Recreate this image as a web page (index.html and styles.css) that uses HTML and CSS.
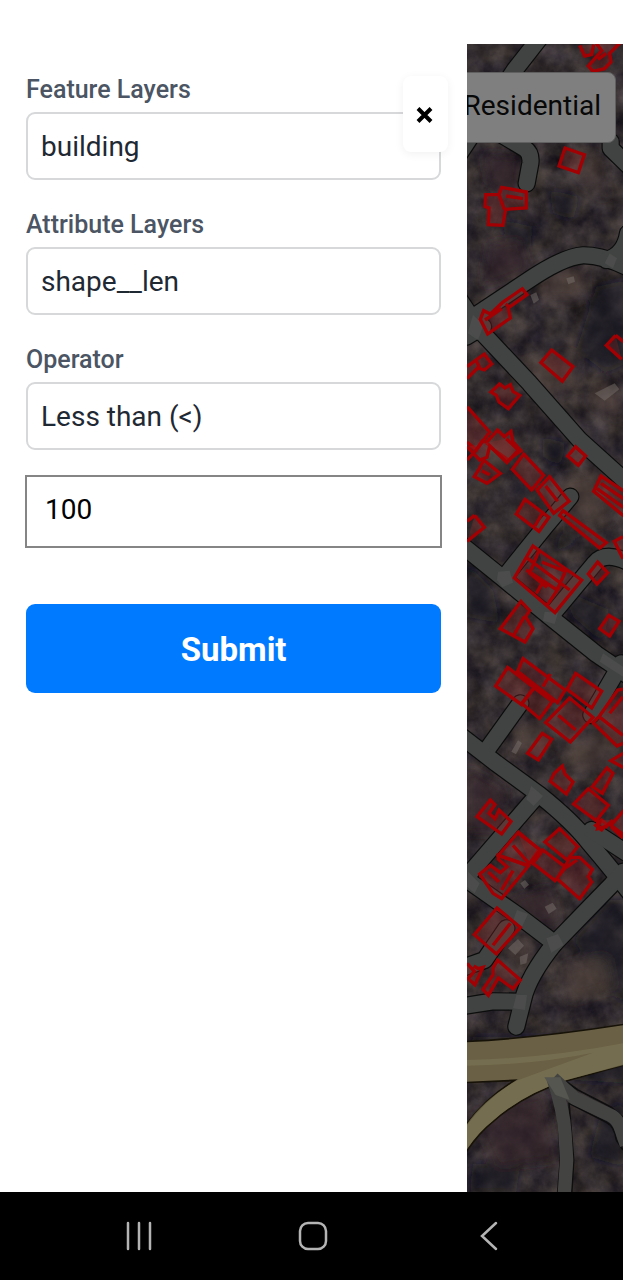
FILE: index.html
```html
<!DOCTYPE html>
<html lang="en">
<head>
<meta charset="utf-8">
<meta name="viewport" content="width=device-width, initial-scale=1">
<title>Layer filter</title>
<link rel="stylesheet" href="styles.css">
</head>
<body>
<div class="app">
  <main class="screen">
    <aside class="drawer">
      <form class="filter">
        <div class="field">
          <label class="label" for="feature">Feature Layers</label>
          <select class="select" id="feature"><option>building</option></select>
        </div>
        <div class="field">
          <label class="label" for="attribute">Attribute Layers</label>
          <select class="select" id="attribute"><option>shape__len</option></select>
        </div>
        <div class="field">
          <label class="label" for="operator">Operator</label>
          <select class="select" id="operator"><option>Less than (&lt;)</option></select>
        </div>
        <input class="value" type="text" value="100" aria-label="Value">
        <button class="submit" type="submit">Submit</button>
      </form>
      <button class="close" type="button" aria-label="Close">
        <svg width="20" height="20" viewBox="0 0 20 20"><path d="M2 4.500L15 17.500M15 4.500L2 17.500" stroke="#000" stroke-width="4" fill="none"/></svg>
      </button>
    </aside>
    <section class="map" aria-label="Map">
      <svg class="map-art" viewBox="12 132 468 3444" preserveAspectRatio="xMinYMin slice" aria-hidden="true">
        <defs>
          <filter id="ground" x="0" y="0" width="100%" height="100%" color-interpolation-filters="sRGB">
            <feTurbulence type="fractalNoise" baseFrequency=".016" numOctaves="5" seed="8"/>
            <feColorMatrix values=".28 .1 0 0 .01  .25 .1 0 0 0  .2 .1 .06 0 .005  0 0 0 0 1"/>
          </filter>
          <filter id="soft" x="-40%" y="-40%" width="180%" height="180%"><feGaussianBlur stdDeviation="16"/></filter>
          <g id="roads" fill="none" stroke-linejoin="round">
            <path d="M235 108L155 210L-10 460"/>
            <path d="M100 395L185 445Q206 460 202 490L191 550"/>
            <path d="M443 425V445L510 510"/>
            <path d="M20 970L40 945L190 845Q300 770 360 766Q420 765 500 805"/>
            <path d="M430 780Q485 765 495 700"/>
            <path d="M10 1010L60 980"/>
            <path d="M-10 900L50 990L200 1150L350 1320L500 1455"/>
            <path d="M-10 1630L120 1735L260 1850L400 1962L500 2030"/>
            <path d="M125 1730L250 1575L322 1490"/>
            <path d="M262 1850L395 1690Q425 1652 500 1688"/>
            <path d="M75 2245L172 2110"/>
            <path d="M-10 2205L100 2290L230 2385Q330 2465 380 2530Q440 2600 510 2690"/>
            <path d="M475 1990L385 2145"/>
            <path d="M215 2395L20 2620"/>
            <path d="M-10 2620L20 2645L170 2750L275 2830"/>
            <path d="M480 2615L445 2655L275 2830Q195 2930 180 3000L160 3080"/>
            <path d="M-10 3020L90 3004L170 3005"/>
            <path d="M385 2490L500 2565"/>
            <path d="M-5 2905L65 2880L130 2785"/>
          </g>
        </defs>
        <rect x="12" y="132" width="468" height="3444" filter="url(#ground)"/>
        <g filter="url(#soft)">
          <path fill="#0e141b" opacity=".6" d="M400 860L490 840V1090L430 1120L340 1050ZM10 1690L90 1770L110 1870L10 1850ZM300 1590L350 1620L270 1660ZM240 1310L310 1330L290 1400L240 1370ZM440 2700H490V3030L330 2820ZM30 3110H490V3250L330 3240L10 3210ZM30 3490L170 3500L160 3576H20ZM410 3350L480 3300V3500L380 3470ZM120 660L210 680L200 740L130 730ZM260 570L350 590L330 660L270 640ZM300 1770L440 1830L420 1930L330 1850Z"/>
          <path fill="#5b4b40" opacity=".5" d="M230 800L370 810L350 900L240 900ZM360 460L410 470L430 600L330 520ZM180 1090L330 1060L350 1160L230 1190ZM290 1440L400 1410L450 1560L330 1590ZM160 2170L240 2150L260 2250L150 2280ZM400 1140L480 1180L470 1260L380 1210ZM300 2900L430 2870L450 2960L320 3000ZM20 1370L180 1290L120 1420ZM300 2220L470 2180L440 2300L330 2320ZM130 2840L200 2800L210 2880L150 2900Z"/>
          <path fill="#35262a" opacity=".65" d="M30 3340L240 3280L280 3480L100 3500ZM80 730L170 720L200 810L60 860ZM60 460L170 470L160 600L80 560ZM10 2300L130 2370L100 2500H10ZM120 2700L260 2660L290 2760L230 2780Z"/>
        </g>
        <g fill="#77706b" opacity=".5">
          <path d="M310 835l22-6 4 16-20 8zM202 885l18-8 8 22-16 12zM172 2650l14-10 12 14-14 12zM245 2720l24-12 12 18-24 16zM135 2845l30-28 18 20-26 28zM170 2870l26-10-6 30-18 4zM145 2255l20-34 12 8-18 34zM395 1180l60-30 14 18-44 34z"/>
        </g>
        <use href="#roads" stroke="#0b0c0c" stroke-width="55" stroke-linecap="round"/>
        <use href="#roads" stroke="#414342" stroke-width="48" stroke-linecap="round"/>
        <g fill="#515352" opacity=".6">
          <path d="M30 945L62 975L45 1020L14 1000ZM105 1715L140 1712L150 1748L118 1762L102 1740ZM245 1835L285 1838L275 1872L240 1862ZM250 2815L285 2802L302 2835L265 2858ZM160 2985H192L186 3030L150 3025ZM205 2358L240 2388L212 2418L190 2398ZM162 2730L195 2742L175 2785L148 2768ZM15 2615L50 2650L35 2680L12 2660ZM420 1960L480 2000V2030L410 1985ZM440 760L462 775L450 805L425 790Z"/>
        </g>
        <path d="M0 3125Q220 3115 490 3072V3193L310 3243Q180 3285 90 3365Q45 3400 0 3470V3388Q60 3300 155 3241L0 3248Z" fill="#6a6046" stroke="#171207" stroke-width="5"/>
        <path d="M12 3180Q250 3175 480 3130V3196L310 3240Q180 3282 90 3362Q45 3397 12 3446V3372Q60 3300 160 3242L390 3158Q220 3193 12 3197Z" fill="#7b7352" opacity=".7"/>
        <g fill="none" stroke-linejoin="round">
          <path d="M260 3262Q282 3310 288 3390L292 3480L284 3580M326 3580L332 3480L318 3310L430 3367Q455 3380 460 3420L480 3450M310 3245L345 3270L445 3322L485 3355" stroke="#0e0e0e" stroke-width="5"/>
          <path d="M270 3235Q302 3330 306 3400L311 3480L304 3580M270 3235L335 3295L440 3345Q465 3355 475 3390L490 3435" stroke="#434442" stroke-width="40"/>
          <path d="M244 3232H292L320 3300L278 3285Z" fill="#565650"/>
        </g>
        <g class="buildings">
          <g transform="translate(0 90)">
            <path d="M350 46L365 78L386 74L392 44M400 40L416 62L376 108L390 124L425 116L444 96L440 70L474 36M405 88L430 70"/>
            <path d="M306 354L364 374L346 428L288 408Z"/>
            <path d="M68 494H108L116 472L190 486V534L128 538L120 586L76 584L78 534L66 530ZM108 494L124 538M130 498L180 506"/>
          </g>
          <g transform="translate(0 720)">
            <path d="M52 238L62 212L82 222L118 188L178 146L192 164L136 204L142 234L74 282ZM66 240L116 206M128 192L142 204"/>
            <path d="M266 330L330 380L298 424L234 368Z"/>
            <path d="M458 286L430 316L476 358M458 286L490 312"/>
            <path d="M12 380L64 342L86 372L64 390L44 384L12 416M40 362L52 388"/>
            <path d="M84 456L110 432L126 444L142 434L150 454L170 466L136 506L108 486L100 466Z"/>
            <path d="M12 500L80 576L40 630L12 606M70 608L104 570L124 590L144 574L150 606L174 632L136 660L94 630Z"/>
          </g>
          <g transform="translate(0 1320)">
            <path d="M12 20L50 60L72 52L80 18L132 68L166 30L130 -4M12 60L40 30L60 0M62 60L112 100L72 130L34 110L50 84ZM56 92L80 104"/>
            <path d="M182 42L242 106L206 150L148 88ZM260 110L318 184L272 220L222 150ZM248 138L284 184"/>
            <path d="M186 178L258 232L228 274L160 222ZM240 216L216 258M338 20L368 48L346 76L314 48Z"/>
            <path d="M490 158L414 108L392 154L490 234M414 130L490 182M402 146L484 204M300 212L430 308L410 324L290 226ZM35 226L64 262L12 304M12 244L35 226"/>
            <path d="M210 318L356 420L276 518L154 414ZM190 352L320 450M228 332L200 400L252 442M312 384L282 450L190 390M240 425L220 460M290 440L252 496M236 366L312 396"/>
            <path d="M404 366L434 398L402 432L376 402ZM438 526L468 544L440 588L410 566ZM480 290L454 304L480 356"/>
            <path d="M174 484L200 512L188 530L210 566L186 606L112 566ZM184 530L150 590"/>
          </g>
          <g transform="translate(0 1920)">
            <path d="M180 56L306 150L284 188L164 94ZM134 82L212 142L176 194L98 138ZM262 102L240 140"/>
            <path d="M176 190L214 144L268 184L230 236ZM338 100L416 154L386 204L312 148ZM320 174L390 232L322 306L248 248ZM286 226L338 270"/>
            <path d="M490 146L464 150L408 230L390 248L462 318L490 306M408 230L480 286M440 220L480 170M238 280L266 298L226 360L194 340Z"/>
            <path d="M298 378L306 402L330 426L310 462L262 424L274 400ZM432 384L450 400L418 460L388 440ZM376 446L436 496L400 542L332 492ZM416 540L430 552L416 570L398 556ZM490 334L444 362L490 388M490 502L444 556L490 590"/>
            <path d="M82 480L96 494L78 520L96 536L108 510L144 544L116 582L42 530Z"/>
            <path d="M166 576L228 628L196 676L106 646ZM290 566L344 620L312 660L246 606Z"/>
          </g>
          <g transform="translate(0 2460)">
            <path d="M106 106L196 138L116 236L90 220L50 162L82 136L112 158L132 140L106 118ZM76 156L108 186M150 76L196 128M164 38L232 90L200 130M116 210L150 152"/>
            <path d="M240 90L308 142L276 182L210 130ZM322 112L350 112L388 148L376 170L386 186L350 236L282 176ZM310 142L342 120M412 0L404 26L430 20L450 0M444 20L480 54"/>
            <path d="M102 264L172 322L100 402L34 344ZM142 310L90 376"/>
            <path d="M104 420L172 480L150 506L106 474L76 526L60 508L90 464L90 444ZM12 430L34 454L12 480M32 438L46 446L60 442L36 494L20 480"/>
          </g>
        </g>
      </svg>
      <div class="chip">Residential</div>
    </section>
  </main>
  <nav class="system-bar" aria-label="System">
    <button class="key" type="button" aria-label="Recent apps"><svg width="32" height="32" viewBox="0 0 32 32"><path d="M5 3V29M16 3V29M27 3V29"/></svg></button>
    <button class="key" type="button" aria-label="Home"><svg width="32" height="32" viewBox="0 0 32 32"><rect x="3" y="3" width="26" height="26" rx="8"/></svg></button>
    <button class="key" type="button" aria-label="Back"><svg width="32" height="32" viewBox="0 0 32 32"><path d="M24 3L10 16L24 29"/></svg></button>
  </nav>
</div>
</body>
</html>
```
FILE: styles.css
```css
* { box-sizing: border-box; }
body {
  margin: 0;
  background: #fff;
  font-family: Roboto, "Liberation Sans", sans-serif;
}
button, input, select { font-family: inherit; }
button { border: 0; padding: 0; }
.app {
  display: flex;
  flex-direction: column;
  min-height: 100vh;
}
.screen {
  flex: 1;
  display: flex;
}
.drawer {
  position: relative;
  z-index: 1;
  width: 75%;
  padding: 75px 26px 26px;
  background: #fff;
}
.filter {
  display: flex;
  flex-direction: column;
}
.field {
  display: flex;
  flex-direction: column;
  gap: 7px;
  margin-bottom: 30px;
}
.field:nth-of-type(3) { margin-bottom: 25px; }
.label {
  color: #4b5563;
  font-size: 25px;
  font-weight: 500;
  line-height: 30px;
}
.select {
  appearance: none;
  height: 68px;
  padding: 0 13px;
  border: 2px solid #d6d8da;
  border-radius: 9px;
  background: #fff;
  color: #1f2933;
  font-size: 28px;
}
.value {
  height: 73px;
  margin: 0 -1px 56px;
  padding: 0 18px 5px;
  border: 2px solid #858585;
  border-radius: 0;
  background: #fff;
  color: #000;
  font-size: 28px;
}
.submit {
  height: 89px;
  padding-top: 2px;
  border-radius: 9px;
  background: #007bff;
  color: #fff;
  font-size: 33px;
  font-weight: 700;
}
.close {
  position: absolute;
  top: 76px;
  right: 19px;
  display: grid;
  place-items: center;
  width: 45px;
  height: 76px;
  border-radius: 8px;
  background: #fff;
  box-shadow: 0 2px 10px rgba(0, 0, 0, .06);
}
.map {
  position: relative;
  flex: 1;
  margin-top: 44px;
  background: #302b2c;
}
.map-art {
  position: absolute;
  inset: 0;
  width: 100%;
  height: 100%;
}
.buildings path {
  fill: rgba(140, 40, 40, .32);
  stroke: #a30003;
  stroke-width: 10;
}
.chip {
  position: absolute;
  top: 28px;
  right: 7px;
  padding: 16px 14px 20px 20px;
  border: 1px solid #606060;
  border-radius: 8px;
  background: #7f7f7f;
  color: #080808;
  font-size: 28px;
  line-height: 33px;
}
.system-bar {
  display: grid;
  grid-template-columns: repeat(3, 1fr);
  height: 88px;
  padding: 0 48px 0 52px;
  background: #000;
}
.key {
  display: grid;
  place-items: center;
  background: none;
}
.key svg {
  fill: none;
  stroke: #b4b4b4;
  stroke-width: 2.5;
  stroke-linecap: round;
}
```
